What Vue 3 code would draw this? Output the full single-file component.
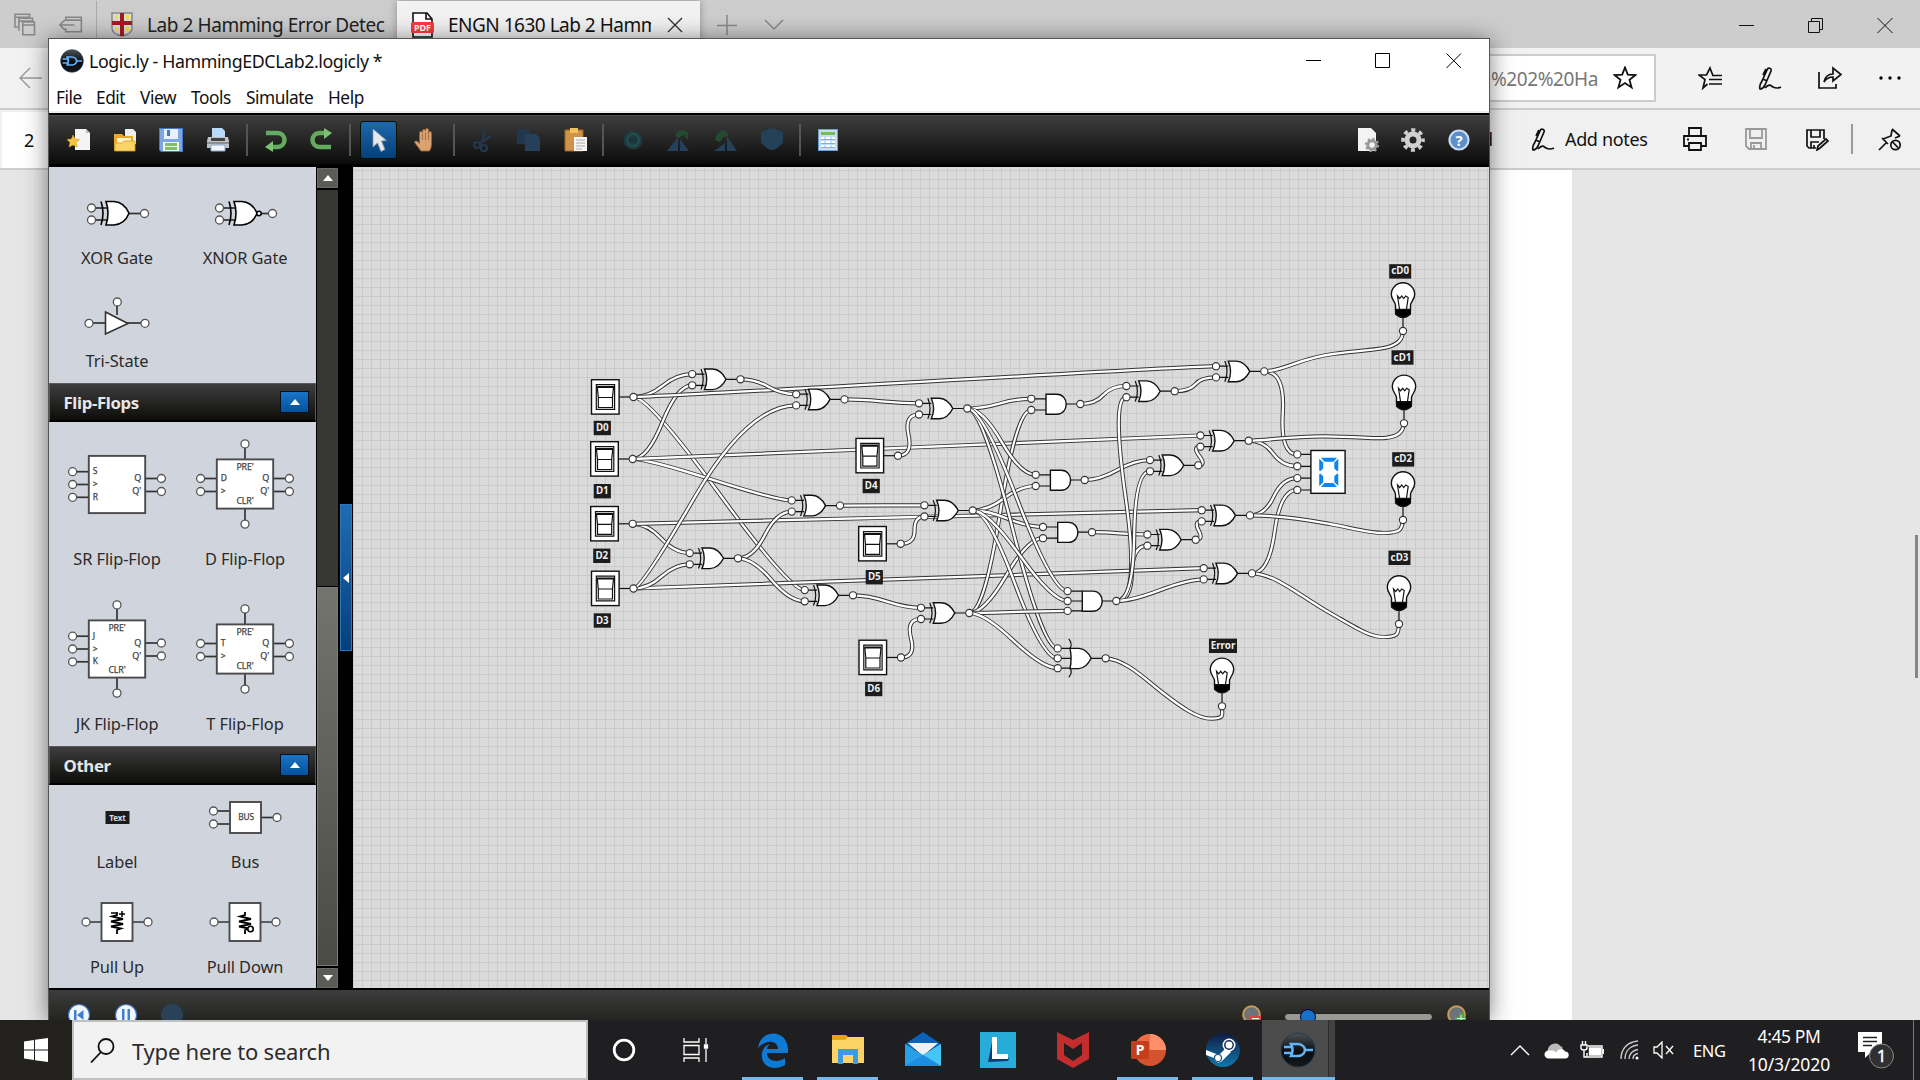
<script setup>
const xors = [
  [740.5, 379.3], [844.5, 399.4], [840, 505.6], [738, 558.3], [853, 595.3],
  [967.3, 408.5], [972.7, 510.5], [969.3, 613], [1174.7, 391.2], [1198.3, 465.3],
  [1195.7, 539.7], [1264.3, 371.4], [1248.7, 440.7], [1250, 515.4], [1252, 573.4],
]
const ands = [[1080.3, 404], [1084.7, 480], [1092, 532.2]]
const and3 = [1116.3, 601]
const or3 = [1105.7, 658.3]
const switches = [
  { n: 'D0', x: 633.5, y: 397, lx: 602.3, ly: 428 },
  { n: 'D1', x: 632.7, y: 459, lx: 602.3, ly: 491.2 },
  { n: 'D2', x: 632.7, y: 523.8, lx: 601.8, ly: 555.8 },
  { n: 'D3', x: 633.5, y: 588.5, lx: 602.3, ly: 620.5 },
  { n: 'D4', x: 898, y: 455.7, lx: 871.2, ly: 486 },
  { n: 'D5', x: 900.7, y: 543.8, lx: 874.3, ly: 577.2 },
  { n: 'D6', x: 901, y: 657.5, lx: 873.7, ly: 689 },
]
const lamps = [
  { n: 'cD0', x: 1403, y: 331, lx: 1400.2, ly: 271.4, w: 22 },
  { n: 'cD1', x: 1404, y: 423.3, lx: 1402.5, ly: 357.5, w: 22 },
  { n: 'cD2', x: 1403, y: 520, lx: 1403.2, ly: 459.4, w: 22 },
  { n: 'cD3', x: 1399, y: 624, lx: 1399.5, ly: 557.8, w: 22 },
  { n: 'Error', x: 1222, y: 706.3, lx: 1223, ly: 645.8, w: 28 },
]
const X = (i, k) => [xors[i - 1][0] - 48.3, xors[i - 1][1] + (k === 1 ? -5.2 : 6)]
const XO = (i) => xors[i - 1]
const A = (i, k) => [ands[i - 1][0] - 49, ands[i - 1][1] + (k === 1 ? -5.2 : 6)]
const AO = (i) => ands[i - 1]
const N = (k) => [and3[0] - 48.7, and3[1] + (k - 2) * 9.9]
const O = (k) => [or3[0] - 48, or3[1] + (k - 2) * 9.9]
const D = (i) => [switches[i].x, switches[i].y]
const S = (k) => [1297.3, 454.4 + (k - 1) * 11.85]

function link([x1, y1], [x2, y2], a = 15, b = a) {
  const mx = (x1 + a + x2 - b) / 2
  const my = (y1 + y2) / 2
  return `M${x1} ${y1}Q${x1 + a} ${y1} ${mx} ${my}Q${x2 - b} ${y2} ${x2} ${y2}`
}
const wires = [
  link(D(0), X(1, 1)), link(D(0), X(5, 1)), link(D(1), X(1, 2)), link(D(1), X(3, 1)),
  link(D(0), X(12, 1)), link(D(1), X(13, 1)), link(D(2), X(4, 1)), link(D(2), X(14, 1)),
  link(D(3), X(15, 1)), link(D(3), X(4, 2)), link(D(3), X(2, 2), 8, 48),
  link(XO(1), X(2, 1)), link(XO(4), X(3, 2)), link(XO(4), X(5, 2)),
  link(XO(2), X(6, 1)), link(D(4), X(6, 2)), link(XO(3), X(7, 1)), link(D(5), X(7, 2), 14, 10),
  link(XO(5), X(8, 1)), link(D(6), X(8, 2)),
  link(XO(6), A(1, 1)), link(XO(8), A(1, 2)), link(XO(6), A(2, 1)), link(XO(7), A(2, 2)),
  link(XO(7), A(3, 1)), link(XO(8), A(3, 2)),
  link(XO(7), O(2)), link(XO(6), O(1)), link(XO(6), N(1)), link(XO(7), N(2)), link(XO(8), N(3)),
  link(XO(8), O(3)),
  link(AO(1), X(9, 1)), link(AO(2), X(10, 1)), link(AO(3), X(11, 1)),
  link(and3, X(9, 2), 24, 15), link(and3, X(11, 2)), link(and3, X(10, 2), 17, 15), link(and3, X(15, 2)),
  link(XO(9), X(12, 2)), link(XO(10), X(13, 2), 8), link(XO(11), X(14, 2), 8),
  link(XO(12), S(1), 21, 17), link(XO(13), S(2)), link(XO(14), S(3)), link(XO(15), S(4), 17),
  'M1264.3 371.3C1283 371.5 1300 358 1333 354C1367 349.5 1380 350 1390 346.5C1398 343.5 1402.5 340 1403 331',
  'M1248.7 440.7C1268 440.7 1290 436 1325 436.3S1375 439 1386 437.8S1403 433 1404 423.3',
  'M1250 515.3C1285 515.5 1310 520.5 1330 524S1370 533.5 1385 533S1402 530 1403 520',
  'M1252 573.3C1275 573.5 1300 596 1330 613S1370 637 1384 637S1398.5 634 1399 624',
  'M1105.7 658.3C1125 659 1145 679 1163 693S1198 719 1212 718.7S1221.5 714 1222 706.3',
]

const dot = (x, y) => `<circle cx="${x}" cy="${y}" r="4" fill="#fff" stroke="#555" stroke-width="1.3"/>`
const line = (a, b, c, d) => `<path d="M${a} ${b}L${c} ${d}" stroke="#333" stroke-width="1.7"/>`
const word = (x, y, t, s = 8, anchor = 'middle') => `<text x="${x}" y="${y}" font-size="${s}" text-anchor="${anchor}" fill="#444" stroke="#444" stroke-width=".25" font-family="Noto Sans, sans-serif">${t}</text>`
const chip = (x, y, w, h) => `<rect x="${x}" y="${y}" width="${w}" height="${h}" fill="#fff" stroke="#4a4a4a" stroke-width="1.9"/>`
const xorShape = (inv) =>
  line(-25, -5, -10, -5) + line(-25, 7, -10, 7) + line(12, 0.5, 26, 0.5) +
  `<path d="M-11 -11.5H-3C4 -11 9 -7 12 0.300C9 8 4 11.5 -3 12H-11Q-7 0 -11 -11.5Z" fill="#fff" stroke="#000" stroke-width="1.6"/><path d="M-16 -11.5Q-12 0 -16 12" fill="none" stroke="#000" stroke-width="1.6"/>` +
  (inv ? '<circle cx="14" cy="0.500" r="2.200" fill="#fff" stroke="#000" stroke-width="1.5"/>' : '') +
  dot(-25.5, -5) + dot(-25.5, 7) + dot(27.5, 0.5)
function flop(ins, tall, pins) {
  const w = 28.2
  const h = tall ? 28.6 : 24.6
  const cy = tall && !pins ? 0.5 : 0
  const oy = cy + (tall ? -6 : -5.5)
  let s = ''
  ins.forEach((t, i) => {
    const y = tall ? cy + (i - 1) * 12.8 : -5.5 + i * 13
    s += line(-42, y, -w, y) + dot(-44.4, y)
  })
  s += line(w, oy, 42, oy) + dot(44.4, oy) + line(w, oy + 13, 42, oy + 13) + dot(44.4, oy + 13)
  if (pins) s += line(0, -h, 0, -h - 14) + dot(0, -h - 15.5) + line(0, h, 0, h + 14) + dot(0, h + 15.5)
  s += chip(-w, cy - h, w * 2, h * 2)
  ins.forEach((t, i) => {
    const y = tall ? cy + (i - 1) * 12.8 : -5.5 + i * 13
    s += word(-w + 4, y + 2.5, t, 8.5, 'start')
  })
  s += word(w - 4, oy + 2.8, 'Q', 9, 'end') + word(w - 4, oy + 15.8, "Q'", 9, 'end')
  if (pins) s += word(0, -h + 11, "PRE'", 8.8) + word(0, h - 5, "CLR'", 8.8)
  return s
}
const zig = '<path d="M0 -10V-7L-5 -5.5L6 -3L-6 -0.5L6 2L-6 4.5L4 6.5L0 8V12" fill="none" stroke="#000" stroke-width="1.8"/>'
const pull = (extra) => line(-30, 0, 30, 0) + chip(-15.5, -19, 31, 38) + zig + extra + dot(-31, 0) + dot(31, 0)

const sections = [
  {
    cls: 'gates', h: 60, items: [
      { t: 'XOR Gate', s: xorShape(false) },
      { t: 'XNOR Gate', s: xorShape(true) },
      { t: 'Tri-State', s: line(0, -1, 0, -12) + line(-26, 7, -12, 7) + line(10, 7, 26, 7) + '<path d="M-11.500 -4L11 7.500L-11.500 18Z" fill="#fff" stroke="#333" stroke-width="1.6"/>' + dot(0.3, -14) + dot(-28, 7.300) + dot(28, 7.300) },
    ],
  },
  {
    title: 'Flip-Flops', cls: 'flops', h: 100, items: [
      { t: 'SR Flip-Flop', s: flop(['S', '&gt;', 'R'], true, false) },
      { t: 'D Flip-Flop', s: flop(['D', '&gt;'], false, true) },
      { t: 'JK Flip-Flop', s: flop(['J', '&gt;', 'K'], true, true) },
      { t: 'T Flip-Flop', s: flop(['T', '&gt;'], false, true) },
    ],
  },
  {
    title: 'Other', cls: 'other', h: 50, items: [
      { t: 'Label', s: '<rect x="-11.500" y="-6" width="24" height="13" fill="#1c1c1c"/><text x="0.500" y="3.500" font-size="8" font-weight="bold" text-anchor="middle" fill="#ddd" font-family="Noto Sans, sans-serif">Text</text>' },
      { t: 'Bus', s: line(-30, -6, -15, -6) + line(-30, 7, -15, 7) + line(15, 0.5, 30, 0.5) + chip(-15, -15, 31, 31) + word(1, 3, 'BUS', 8.3) + dot(-31.5, -6) + dot(-31.5, 7) + dot(32, 0.5) },
      { t: 'Pull Up', s: pull('<path d="M-6 -9H-1M2 -8H8M5 -11V-5" stroke="#000" stroke-width="1.5"/>') },
      { t: 'Pull Down', s: pull('<circle cx="5.500" cy="7" r="2.700" fill="#fff" stroke="#000" stroke-width="1.600"/>') },
    ],
  },
]

const tools = {
  new: '<path d="M8 1h11l4 4v17H8z" fill="#f4f4f4"/><path d="M19 1v4h4z" fill="#bbb"/><path d="M6 7l2 4 4.500.5-3.300 3 1 4.500L6 17l-4 2 1-4.500-3-3 4.500-.5z" fill="#f6c445" stroke="#d99a1c" stroke-width=".6"/>',
  open: '<path d="M12 1h8l3 3v12H12z" fill="#eee"/><path d="M1 6h8l2 2h9v15H1z" fill="#e9a92c"/><path d="M4 10h14v5H4z" fill="#fff3c8"/><path d="M2 15h7l2-2h11v10H2z" fill="#fbd468" stroke="#d99a2c" stroke-width=".8"/>',
  save: '<path d="M0 0h24v24H2l-2-2z" fill="#4377c9"/><path d="M1 1h22v22H2l-1-1z" fill="#7ea6e3"/><path d="M5 1h14v10H5z" fill="#e8f0fb"/><path d="M8 2h3v6H8z" fill="#4377c9"/><path d="M4 14h16v9H4z" fill="#eef6e6"/><path d="M6 15h12v3H6zM6 19h12v3H6z" fill="#82be6b"/>',
  print: '<path d="M6 0h10l3 3v9H6z" fill="#b9dbfa"/><path d="M2 9h20l1 4v7H1v-7z" fill="#bfc1c4"/><path d="M5 10h14v3H5z" fill="#444"/><path d="M1 14h22v2H1z" fill="#8c8f92"/><path d="M5 17h14v6H5z" fill="#f1f5fa" stroke="#86a9cf"/>',
  undo: '<path d="M3 5h11c10 0 10 14 0 14H9" fill="none" stroke="#64aa5f" stroke-width="4.500"/><path d="M10 13v11L2 19z" fill="#7cc176"/>',
  redo: '<path d="M22 19H11C1 19 1 5 11 5h4" fill="none" stroke="#64aa5f" stroke-width="4.500"/><path d="M15 0v11l8-6z" fill="#7cc176"/>',
  pointer: '<path d="M7 1v18l4.500-4 3.500 8.500 4-2L15.500 13l5-.5z" fill="#e8e8ea" stroke="#8a95a5" stroke-width=".8"/>',
  hand: '<path d="M8 23c-2-3-4-5-6-8-1-2 1-3 3-1l1.500 1.500V5c0-2 3-2 3 0V3c0-2 3-2 3 0v-1c0-2 3-2 3 0V5c0-2 3-2 3 0v11c0 3-1 5-2 7z" fill="#dba271" stroke="#9a6238" stroke-width=".9"/><path d="M9.500 6v6M12.500 4v8M15.500 5v7" stroke="#9a6238" stroke-width=".8"/>',
  cut: '<g fill="none" stroke="#23384c" stroke-width="2.200"><path d="M15 1l-3 14M21 8L9 16"/><circle cx="7" cy="17" r="3"/><circle cx="14" cy="20" r="3"/></g>',
  copy: '<path d="M1 1h10l3 3v12H1z" fill="#20374d"/><path d="M9 6h11l4 4v13H9z" fill="#24405a"/>',
  paste: '<path d="M2 2h18v21H2z" fill="#cf9248" stroke="#9c672b"/><path d="M7 0h8v5H7z" fill="#f2c15c"/><path d="M11 9h13v14H11z" fill="#f5f5f5"/><path d="M13 12h9M13 15h9M13 18h9M13 21h6" stroke="#aaa"/>',
  minus: '<circle cx="13" cy="12" r="9.500" fill="#1d3a42"/><circle cx="13" cy="12" r="6" fill="none" stroke="#24504a" stroke-width="2"/><path d="M9 10.500h8v3H9z" fill="#1a333b"/>',
  rotl: '<path d="M1 23L12 9v14zM14 11l9 12h-9z" fill="#23415a"/><path d="M9 7Q14-1 22 4v8l-4-5-6 3z" fill="#23492f"/>',
  rotr: '<path d="M1 23l11-8v8zM14 8l10 15H14z" fill="#23415a"/><path d="M2 12Q4 2 12 2l4 6-6 1-3 5z" fill="#23492f"/>',
  shield: '<path d="M8 2Q13-2 18 2l6 2v11l-6 5q-5 4-10 0l-6-5V4z" fill="#234259"/>',
  table: '<path d="M2 1h20v22H2z" fill="#6f9fdc"/><path d="M3 2h18v20H3z" fill="#c9dcf5"/><path d="M5 4h14v3H5z" fill="#76bb66"/><path d="M5 9h3v2H5zM10 9h4v2h-4zM16 9h3v2h-3zM5 13h3v2H5zM10 13h4v2h-4zM16 13h3v2h-3zM5 17h3v2H5zM10 17h4v2h-4zM16 17h3v2h-3z" fill="#fff"/><path d="M5 11.500h14M5 15.500h14M5 19.500h14" stroke="#86abdf"/>',
  page: '<path d="M3 0h13l5 5v18H3z" fill="#f3f3f3"/><g transform="translate(17 17)"><circle r="4.200" fill="none" stroke="#999" stroke-width="3"/><circle r="6.200" fill="none" stroke="#999" stroke-width="2" stroke-dasharray="2.4 2.4"/></g>',
  gear: '<circle cx="12" cy="12" r="6" fill="none" stroke="#d0d0d0" stroke-width="5"/><circle cx="12" cy="12" r="10" fill="none" stroke="#d0d0d0" stroke-width="3.600" stroke-dasharray="4 3.850" stroke-dashoffset="2"/>',
  help: '<circle cx="12" cy="12" r="9.500" fill="#5a8fcb" stroke="#c7dcf3" stroke-width="2.200"/><text x="12" y="17.500" font-size="15" font-weight="bold" text-anchor="middle" fill="#fff" font-family="Noto Sans, sans-serif">?</text>',
}
const toolbar = ['new', 'open', 'save', 'print', '|', 'undo', 'redo', '|', 'pointer', 'hand', '|', 'cut', 'copy', 'paste', '|', 'minus', 'rotl', 'rotr', 'shield', '|', 'table']
const toolbarRight = ['page', 'gear', 'help']

const ui = {
  star: '<path d="M12 1.500l2.800 7.200 7.700.3-6 4.900 2.100 7.600-6.600-4.400-6.600 4.400 2.100-7.600-6-4.900 7.700-.3z" fill="none" stroke="#111" stroke-width="1.800"/>',
  favs: '<path d="M9.500 18L5 22l2-8.500L1 9h7.500L12 2l2.700 7" fill="none" stroke="#111" stroke-width="1.700"/><path d="M14 9.500h10M11 13.500h13M11 18h13" stroke="#111" stroke-width="1.700"/>',
  pen: '<path d="M2 23c-1-3 0-5 2-8L9 4c1-3 5-2 4 1L7 19c-1 2-3 4-5 4zM5 13l4 2M8 3l-3 6M7 22c5-5 6-2 8-1s4 2 8 0" fill="none" stroke="#111" stroke-width="1.700"/>',
  share: '<path d="M1 6v16h17v-4M6 16c1-5 4-8 9-8V2l8 6.500-8 6.500v-4c-4 0-7 2-9 5z" fill="none" stroke="#111" stroke-width="1.700"/>',
  dots: '<circle cx="3" cy="12" r="1.700"/><circle cx="12" cy="12" r="1.700"/><circle cx="21" cy="12" r="1.700"/>',
  printer: '<path d="M6 8V1h12v7M6 19H1V9h22v10h-5M6 16h12v7H6zM4 12.500h2" fill="none" stroke="#111" stroke-width="1.800"/>',
  disk: '<path d="M2 2h20v20H5l-3-3zM6 2v9h12V2M7 22v-6h10v6M10 18v4" fill="none" stroke="#999" stroke-width="1.800"/>',
  diskpen: '<path d="M11 21H4l-2-2V3h17v9M6 3v7h9V3M6 21v-6h8M9 18v3M12 23l1-4 8-7 2 2-8 7z" fill="none" stroke="#111" stroke-width="1.700"/>',
  pin: '<path d="M1 23l8-8M4 11l6 6M5 12l8-3 1-6M14 2l8 7M22 9l-5 2" fill="none" stroke="#111" stroke-width="1.700"/><circle cx="17.500" cy="18" r="4.700" fill="none" stroke="#111" stroke-width="1.700"/><path d="M14.500 15l6 6" stroke="#111" stroke-width="1.700"/>',
}

const logo = '<defs><linearGradient id="lg" x1="0" y1="0" x2="0" y2="1"><stop offset="0" stop-color="#4b5257"/><stop offset=".55" stop-color="#0a0c0e"/><stop offset="1" stop-color="#15191c"/></linearGradient></defs><circle cx="18" cy="18" r="17" fill="url(#lg)" stroke="#25394a" stroke-width="1"/><path d="M11 12h7c5 0 7 4 7 6s-2 6-7 6h-7q3-6 0-12zM25 18h8M4 15h8M4 21h8" fill="none" stroke="#63b4f7" stroke-width="2.600"/>'
const apps = [
  { on: true, s: '<path d="M3 16C5-3 32-4 33 17v4H12c0 9 12 10 18 5v7C18 40 5 34 7 21c1-5 4-8 8-9-3 3-3 4-3 5h11c0-9-13-10-20-1z" fill="#0d7ad6"/>' },
  { on: true, s: '<path d="M2 3h14l3 3v6H2z" fill="#e8a317"/><path d="M2 8h13l3-3h16v26H2z" fill="#fdd367"/><path d="M8 18q0-1 1-1h18q1 0 1 1v14h-5v-9H13v9H8z" fill="#3f9bdf"/>' },
  { on: false, s: '<path d="M0 12L18 0l18 12-3 5H3z" fill="#0a62b8"/><path d="M3 11h30L18 24z" fill="#eef0f3"/><path d="M0 12l18 11L36 12v22H0z" fill="#28a0e8"/><path d="M18 23l18-11v22z" fill="#45c6f6"/><path d="M0 34l18-11 18 11z" fill="#1c8de0"/>' },
  { on: false, s: '<path d="M0 0h36v36H0z" fill="#27acd9"/><path d="M13 5L8 30l20-1 1-3H16z" fill="#0a3a78"/><path d="M12 5h5v17h11v5H12z" fill="#fff"/>' },
  { on: false, s: '<path d="M2 0l16 8L34 0v27l-16 9L2 27zM9 11v12l9 6 9-6V11l-9 6z" fill="#c22d2e" fill-rule="evenodd"/>' },
  { on: true, s: '<circle cx="20" cy="18" r="16" fill="#d35230"/><path d="M20 2a16 16 0 0 1 16 16H20z" fill="#ff8f6b"/><path d="M20 2v16H4A16 16 0 0 1 20 2z" fill="#ed6c47"/><rect x="1" y="9" width="18" height="18" rx="1.500" fill="#c43e1c"/><text x="10" y="23" font-size="14" font-weight="bold" text-anchor="middle" fill="#fff" font-family="Noto Sans, sans-serif">P</text>' },
  { on: true, s: '<defs><linearGradient id="st" x1="0" y1="0" x2="0" y2="1"><stop offset="0" stop-color="#101b40"/><stop offset="1" stop-color="#1078ae"/></linearGradient></defs><circle cx="18" cy="18" r="17" fill="url(#st)"/><path d="M1 18l13 5 8-8 4 5-9 9c-3 3-8 1-8-3l-8-3z" fill="#fff"/><circle cx="24" cy="13" r="6.500" fill="#fff"/><circle cx="24" cy="13" r="4.200" fill="none" stroke="#1b2c57" stroke-width="1.500"/><circle cx="13" cy="26" r="3.500" fill="none" stroke="#1b4c80" stroke-width="1.200"/>' },
  { on: true, active: true, s: logo },
]
const menus = ['File', 'Edit', 'View', 'Tools', 'Simulate', 'Help']
</script>

<template>
  <div class="screen">
    <div class="browser">
      <div class="tabs">
        <svg class="i-tabs" width="84" height="24" viewBox="0 0 84 24" fill="none" stroke="#888" stroke-width="1.6"><path d="M4 14H1V1h15v4M1 4h15M5 18V5h14v4M5 8h14M9 9h12v13H9zM9 12h12" /><path d="M53 8V4h16v15H53v-4M53 7h16M48 12h14M52 7l-5 5 5 5" /></svg>
        <div class="tab">
          <svg width="22" height="25" viewBox="0 0 22 25"><path d="M1 1h20v15c0 5-5 7-10 8C6 23 1 21 1 16z" fill="#ddd" stroke="#888" stroke-width="1.5" /><path d="M9 1h4v8h8v4h-8v11H9V13H1V9h8z" fill="#a11d20" /><path d="M4 3h3v4H4zM15 3h3v4h-3zM4 15h3v4H4zM15 15h3v4h-3z" fill="#f5e13d" /></svg>
          <span class="tt t1">Lab 2 Hamming Error Detec</span>
        </div>
        <div class="tab on">
          <svg width="24" height="26" viewBox="0 0 24 26"><path d="M2 1h14l5 6v18H2z" fill="#fff" stroke="#111" stroke-width="1.6" /><path d="M15 1v6h6" fill="none" stroke="#111" stroke-width="1.6" /><rect x="0" y="10" width="23" height="11" rx="1.500" fill="#fb3b3b" /><text x="11.500" y="19" font-size="9" font-weight="bold" text-anchor="middle" fill="#fff" font-family="Noto Sans, sans-serif">PDF</text></svg>
          <span class="tt t2">ENGN 1630 Lab 2 Hamm</span>
          <svg width="16" height="16" viewBox="0 0 16 16"><path d="M1 1l14 14M15 1L1 15" stroke="#333" stroke-width="1.4" /></svg>
        </div>
        <svg class="plus" width="70" height="20" viewBox="0 0 70 20" fill="none" stroke="#888" stroke-width="1.5"><path d="M0 10.500h20M10 0v20M48 5l9 9 9-9" /></svg>
        <svg class="winb" width="154" height="16" viewBox="0 0 154 16" fill="none" stroke="#111"><path d="M0 8.500h15M69.500 4.500h11v11h-11zM72.500 4V1.500h11v11h-3M138.500 1l15 15M153.500 1l-15 15" /></svg>
      </div>
      <div class="address">
        <svg class="back" width="24" height="22" viewBox="0 0 24 22" fill="none" stroke="#999" stroke-width="1.4"><path d="M23 11H1M11 1L1 11l10 10" /></svg>
        <div class="url"><span>%202%20Ha</span><svg width="24" height="24" viewBox="0 0 24 24" v-html="ui.star"></svg></div>
        <div class="acts">
          <svg v-for="k in ['favs', 'pen', 'share', 'dots']" :key="k" width="24" height="24" viewBox="0 0 24 24" v-html="ui[k]"></svg>
        </div>
      </div>
      <div class="pdfbar">
        <div class="pageno">2</div>
        <span class="read">d</span>
        <svg class="p1" width="24" height="24" viewBox="0 0 24 24" v-html="ui.pen"></svg>
        <span class="notes">Add notes</span>
        <svg class="p2" width="24" height="24" viewBox="0 0 24 24" v-html="ui.printer"></svg>
        <svg class="p3" width="24" height="24" viewBox="0 0 24 24" v-html="ui.disk"></svg>
        <svg class="p4" width="24" height="24" viewBox="0 0 24 24" v-html="ui.diskpen"></svg>
        <i class="bar"></i>
        <svg class="p5" width="24" height="24" viewBox="0 0 24 24" v-html="ui.pin"></svg>
      </div>
      <div class="doc"><div class="sheet"></div><div class="thumb"></div></div>
    </div>

    <div class="window">
      <div class="title">
        <svg width="24" height="24" viewBox="0 0 36 36" v-html="logo"></svg>
        <span class="name">Logic.ly - HammingEDCLab2.logicly *</span>
        <svg class="ctl" width="156" height="16" viewBox="0 0 156 16" fill="none" stroke="#000"><path d="M0 7.500h15M69.500.5h14v14h-14zM140.500.5l14.500 14.500M155 .5L140.500 15" /></svg>
      </div>
      <div class="menu"><span v-for="m in menus" :key="m" :class="m.toLowerCase()">{{ m }}</span></div>
      <div class="toolbar">
        <template v-for="(t, i) in toolbar" :key="i">
          <i v-if="t === '|'" class="sep"></i>
          <div v-else class="tool"><div :class="{ sel: t === 'pointer' }"><svg width="24" height="24" viewBox="0 0 24 24" v-html="tools[t]"></svg></div></div>
        </template>
        <div class="spring"></div>
        <div v-for="t in toolbarRight" :key="t" class="tool r"><svg width="24" height="24" viewBox="0 0 24 24" v-html="tools[t]"></svg></div>
      </div>
      <div class="work">
        <div class="panel">
          <template v-for="s in sections" :key="s.cls">
            <div v-if="s.title" class="head"><span>{{ s.title }}</span><div class="fold"><svg width="10" height="6" viewBox="0 0 10 6"><path d="M0 6L5 0l5 6z" fill="#fff" /></svg></div></div>
            <div class="grid" :class="s.cls">
              <div v-for="it in s.items" :key="it.t" class="item">
                <svg width="120" :height="s.h" :viewBox="`-60 ${-s.h / 2} 120 ${s.h}`" v-html="it.s"></svg>
                <span>{{ it.t }}</span>
              </div>
            </div>
          </template>
        </div>
        <div class="scroll">
          <div class="sb"><svg width="10" height="6" viewBox="0 0 10 6"><path d="M0 6L5 0l5 6z" fill="#fff" /></svg></div>
          <div class="track"></div>
          <div class="grip"></div>
          <div class="sb"><svg width="10" height="6" viewBox="0 0 10 6"><path d="M0 0l5 6 5-6z" fill="#fff" /></svg></div>
        </div>
        <div class="divider"><div class="handle"><svg width="6" height="10" viewBox="0 0 6 10"><path d="M6 0L0 5l6 5z" fill="#fff" /></svg></div></div>
        <svg class="canvas" width="1136" height="821" viewBox="353 167 1136 821">
          <defs><pattern id="cells" x="362" y="170" width="9" height="9" patternUnits="userSpaceOnUse"><path d="M0 0h9v1H1v8H0z" fill="#cbcbcb" /></pattern></defs>
          <rect x="353" y="167" width="1136" height="821" fill="#dbdbdb" />
          <rect x="353" y="167" width="1136" height="821" fill="url(#cells)" />
          <g v-for="(w, i) in wires" :key="i" fill="none"><path :d="w" stroke="#333" stroke-width="4.2" /><path :d="w" stroke="#fff" stroke-width="2.3" /></g>

          <g v-for="(g, i) in xors" :key="'x' + i" :transform="`translate(${g[0]} ${g[1]})`" class="gate">
            <path d="M-48 -5.200H-36M-48 6H-36M-15 0H0" />
            <path class="body" d="M-36 -10.300H-28C-21 -10 -17 -5 -14.500 0C-17 5 -21 10 -28 10.300H-36Q-31.500 0 -36 -10.300Z" />
            <path d="M-39.500 -10.300Q-35 0 -39.500 10.300" />
            <circle cx="-48.300" cy="-5.200" r="3.600" /><circle cx="-48.300" cy="6" r="3.600" /><circle r="3.600" />
          </g>
          <g v-for="(g, i) in ands" :key="'a' + i" :transform="`translate(${g[0]} ${g[1]})`" class="gate">
            <path d="M-49 -5.200H-34M-49 6H-34M-15 0H0" />
            <path class="body" d="M-34.300 -9.800H-23.500C-11 -9.800 -11 10.200 -23.500 10.200H-34.300Z" />
            <circle cx="-49" cy="-5.200" r="3.600" /><circle cx="-49" cy="6" r="3.600" /><circle r="3.600" />
          </g>
          <g :transform="`translate(${and3[0]} ${and3[1]})`" class="gate">
            <path d="M-49 -9.900H-34M-49 0H-34M-49 9.900H-34M-15 0H0" />
            <path class="body" d="M-34 -9.900H-23.500C-11 -9.900 -11 10.300 -23.500 10.300H-34Z" />
            <circle cx="-48.700" cy="-9.900" r="3.600" /><circle cx="-48.700" r="3.600" /><circle cx="-48.700" cy="9.900" r="3.600" /><circle r="3.600" />
          </g>
          <g :transform="`translate(${or3[0]} ${or3[1]})`" class="gate">
            <path d="M-48 -9.900H-35M-48 0H-34M-48 9.900H-35M-15 0H0M-37 -19.500Q-33 -15 -35.500 -10M-35.500 10Q-33 15 -37 19" />
            <path class="body" d="M-35.700 -9.900H-27C-21 -9.500 -17 -5 -14.500 0C-17 5 -21 10 -27 10.300H-35.700Q-33.500 0 -35.700 -9.900Z" />
            <circle cx="-48" cy="-9.900" r="3.600" /><circle cx="-48" r="3.600" /><circle cx="-48" cy="9.900" r="3.600" /><circle r="3.600" />
          </g>

          <g v-for="s in switches" :key="s.n">
            <g :transform="`translate(${s.x} ${s.y})`" class="gate">
              <path d="M-14 0H0" />
              <rect class="body" x="-42" y="-17.300" width="27.600" height="34.400" />
              <path d="M-37.200 -12.300h18.300v24.600h-18.300z" />
              <path d="M-35.200 10.500V0.500L-36.200 -9.500H-20L-21 0.500V10.500ZM-35.200 0.500H-21M-36 -7.500V-10.500H-20V-7.500" />
              <circle r="3.600" />
            </g>
            <rect :x="s.lx - 8.600" :y="s.ly - 7.200" width="17.200" height="14.400" fill="#1c1c1c" />
            <text class="lab" :x="s.lx" :y="s.ly + 3">{{ s.n }}</text>
          </g>
          <g v-for="l in lamps" :key="l.n">
            <g :transform="`translate(${l.x} ${l.y})`" class="gate">
              <path d="M0 -13V0" />
              <path class="body" d="M-7.500 -21.500V-26C-8 -29 -11.700 -32 -11.700 -36.500A11.700 11.700 0 0 1 11.700 -36.500C11.700 -32 8 -29 7.500 -26V-21.500Z" />
              <path d="M-3.500 -22L-5.500 -35L-3.300 -32.500L-1.300 -35L0.700 -32.500L2.700 -35L5.200 -33.500L3.500 -22" />
              <path d="M-7.500 -21.500H7.500V-17Q4 -13.500 0 -13.500Q-4 -13.500 -7.500 -17Z" fill="#000" />
              <circle r="3.600" />
            </g>
            <rect :x="l.lx - l.w / 2" :y="l.ly - 7.200" :width="l.w" height="14.400" fill="#1c1c1c" />
            <text class="lab" :x="l.lx" :y="l.ly + 3">{{ l.n }}</text>
          </g>
          <g class="gate">
            <path d="M1297 454.400H1311M1297 466.300H1311M1297 478.100H1311M1297 490H1311" />
            <rect class="body" x="1310.900" y="450.500" width="34.200" height="42.800" />
            <circle v-for="k in 4" :key="k" cx="1297.300" :cy="454.400 + (k - 1) * 11.850" r="3.600" />
          </g>
          <path d="M1321 457.700h16l-3.500 4h-9zM1319.200 458.700l4 3.700v6l-3 2.800-1-1zM1338.300 458.700l-4 3.700v6l3 2.800 1-1zM1319.200 486l4-3.700v-6l-3-2.800-1 1zM1338.300 486l-4-3.700v-6l3-2.800 1 1zM1321 487h16l-3.500-4h-9z" fill="#0b86f0" />
        </svg>
      </div>
      <div class="status">
        <svg width="24" height="24" viewBox="0 0 24 24"><circle cx="12" cy="12" r="10.500" fill="#f2f7fd" stroke="#3f74bd" stroke-width="1.200" /><path d="M7 7h2.500v10H7zM16.500 7v10L10 12z" fill="#3f7fd0" /></svg>
        <svg width="24" height="24" viewBox="0 0 24 24"><circle cx="12" cy="12" r="10.500" fill="#f2f7fd" stroke="#3f74bd" stroke-width="1.200" /><path d="M8 6h2.500v12H8zM13.500 6H16v12h-2.500z" fill="#3f7fd0" /></svg>
        <svg width="24" height="24" viewBox="0 0 24 24"><circle cx="12" cy="12" r="11" fill="#294257" /></svg>
        <div class="spring"></div>
        <svg class="zo" width="20" height="20" viewBox="0 0 20 20"><circle cx="9.500" cy="9.500" r="8.300" fill="#6c737a" stroke="#c99b55" stroke-width="2" /><path d="M8 11h11v5H8z" fill="#ee3b3b" /><path d="M10 13h7v1.200h-7z" fill="#fff" /></svg>
        <div class="slider"><i></i></div>
        <svg class="zi" width="20" height="20" viewBox="0 0 20 20"><circle cx="9.500" cy="9.500" r="8.300" fill="#6c737a" stroke="#c99b55" stroke-width="2" /><path d="M8 12h4V8h4v4h3v5H8z" fill="#4aa845" /><path d="M10 13.500h8M14 10v6" stroke="#cfe" /></svg>
      </div>
    </div>

    <div class="taskbar">
      <div class="start"><svg width="24" height="24" viewBox="0 0 24 24" fill="#fff"><path d="M0 3.500l10-1.500v9.500H0zM11 1.800L24 0v11.500H11zM0 12.500h10V22L0 20.500zM11 12.500h13V24l-13-1.800z" /></svg></div>
      <div class="search"><svg width="25" height="25" viewBox="0 0 25 25" fill="none" stroke="#111" stroke-width="1.800"><circle cx="16" cy="8.500" r="7.500" /><path d="M11 14L1 24.500" /></svg><span>Type here to search</span></div>
      <svg class="cort" width="24" height="24" viewBox="0 0 24 24"><circle cx="12" cy="12" r="9.800" fill="none" stroke="#fff" stroke-width="2.800" /></svg>
      <svg class="tv" width="26" height="24" viewBox="0 0 26 24" fill="none" stroke="#fff" stroke-width="1.300"><path d="M1 0v4h15V0M1 7.500h15v9H1zM1 24v-4h15v4M23 0v6M23 11v13" /><path d="M21.500 7h3v3h-3z" fill="#fff" /></svg>
      <div class="apps"><div v-for="(a, i) in apps" :key="i" class="app" :class="{ on: a.on, active: a.active }"><svg width="36" height="36" viewBox="0 0 36 36" v-html="a.s"></svg></div></div>
      <div class="tray">
        <svg class="s1" width="20" height="12" viewBox="0 0 20 12" fill="none" stroke="#fff" stroke-width="1.400"><path d="M1 11l9-9 9 9" /></svg>
        <svg class="s2" width="25" height="17" viewBox="0 0 25 17"><path d="M4 12C2 5 8 0 14 2l5 4-9 9z" fill="#bbb" /><path d="M5 16.500c-6 0-6-8 0-8 4 0 5 0 7 2 3-5 8-4 9-1 5 0 5 7 0 7z" fill="#fff" /></svg>
        <svg class="s3" width="24" height="18" viewBox="0 0 24 18" fill="none" stroke="#fff" stroke-width="1.400"><path d="M8 5h14v11H7v-4M23.500 8v5M1 4h6v3q0 2-3 2t-3-2zM2.500 4V0M5.500 4V0M4 9v7h3" /><path d="M9.500 7h11v7h-11z" fill="#fff" /></svg>
        <svg class="s4" width="20" height="20" viewBox="0 0 20 20" fill="none" stroke="#ccc" stroke-width="1.400"><path d="M1 19C1 8 8 2 18 1M5 19C5 11 10 6 18 5M9 19c0-5 4-9 9-9.500M13 19c0-3 2-5 5-5.500" /><circle cx="17" cy="18" r="1.500" fill="#fff" stroke="none" /></svg>
        <svg class="s5" width="22" height="18" viewBox="0 0 22 18" fill="none" stroke="#fff" stroke-width="1.300"><path d="M1 6h3l5-5v16l-5-5H1zM13 5l7 8M20 5l-7 8" /></svg>
        <span class="eng">ENG</span>
        <div class="clock"><span class="time">4:45 PM</span><span class="date">10/3/2020</span></div>
        <svg class="note" width="38" height="38" viewBox="0 0 38 38"><path d="M1 1h24v20H14l-6 6v-6H1z" fill="#fff" /><path d="M6 6.500h14M6 10.500h14M6 14.500h9" stroke="#222" stroke-width="1.300" /><circle cx="24.500" cy="25" r="12" fill="#303030" stroke="#888" /><text x="24.500" y="31" font-size="17" text-anchor="middle" fill="#fff" stroke="#fff" stroke-width=".4" font-family="Noto Sans, sans-serif">1</text></svg>
        <i class="peek"></i>
      </div>
    </div>
  </div>
</template>

<style>
body { margin: 0; overflow: hidden; }
</style>

<style scoped>
.screen { position: relative; width: 1920px; height: 1080px; overflow: hidden; font-family: "Noto Sans", "Open Sans", sans-serif; color: #111; display: flex; flex-direction: column; }
.screen * { box-sizing: border-box; }
svg { display: block; flex: none; }
span { white-space: nowrap; }
.spring { flex: 1; }
.browser { height: 1020px; display: flex; flex-direction: column; background: #e6e6e6; }
.tabs { height: 48px; background: #cdcdcd; display: flex; align-items: center; flex: none; padding-top: 1px; }
.i-tabs { margin-left: 14px; width: 82px; }
.tab { display: flex; align-items: center; height: 48px; width: 301px; padding-left: 14px; border-left: 1px solid #aaa; }
.tab.on { background: #f2f2f2; border: 0; width: 303px; box-shadow: 0 0 8px rgba(0,0,0,.3); }
.tt { font-size: 19px; overflow: hidden; height: 30px; line-height: 30px; }
.t1 { margin-left: 14px; width: 240px; letter-spacing: -.42px; color: #222; }
.t2 { margin-left: 13px; width: 203px; margin-right: 16px; letter-spacing: -.5px; }
.plus { margin-left: 17px; }
.winb { margin-left: auto; margin-right: 27px; }
.address { height: 62px; background: #f2f2f2; border-bottom: 2px solid #ccc; display: flex; align-items: center; flex: none; }
.back { margin-left: 19px; }
.url { margin-left: auto; width: 400px; height: 48px; border: 2px solid #ccc; background: #fff; display: flex; align-items: center; justify-content: flex-end; padding-right: 17px; gap: 15px; color: #777; font-size: 19px; letter-spacing: -.4px; }
.url span { padding-top: 2px; }
.acts { display: flex; gap: 36px; margin: 0 18px 0 42px; }
.pdfbar { height: 60px; background: #f0f0f0; border-bottom: 2px solid #ccc; display: flex; align-items: center; flex: none; font-size: 18px; }
.pageno { margin-left: 2px; background: #fff; height: 56px; width: 90px; padding-left: 22px; line-height: 57px; align-self: flex-end; }
.read { margin-left: auto; }
.p1 { margin-left: 38px; }
.notes { margin-left: 10px; width: 84px; letter-spacing: -.35px; }
.p2 { margin-left: 34px; } .p3 { margin-left: 37px; } .p4 { margin-left: 37px; }
.bar { width: 2px; height: 30px; background: #999; margin-left: 22px; }
.p5 { margin-left: 25px; margin-right: 18px; }
.doc { flex: 1; display: flex; }
.sheet { width: 1524px; margin-left: 48px; background: #fff; }
.thumb { width: 3px; height: 143px; margin: 365px 2px 0 auto; background: #858585; }

.window { position: absolute; left: 48px; top: 38px; width: 1442px; height: 982px; overflow: hidden; background: #fff; border: 1px solid #555; border-bottom: 0; display: flex; flex-direction: column; clip-path: inset(-40px -40px 0 -40px); box-shadow: 0 2px 22px rgba(0,0,0,.5); }
.title { height: 43px; display: flex; align-items: center; padding-left: 11px; flex: none; }
.name { margin-left: 5px; font-size: 17.800px; letter-spacing: -.4px; }
.ctl { margin-left: auto; margin-right: 27px; }
.menu { height: 31px; flex: none; display: flex; padding-left: 7px; border-bottom: 2px solid #eee; font-size: 17.300px; line-height: 32px; letter-spacing: -.45px; }
.file { width: 40px; } .edit { width: 44px; } .view { width: 51px; } .tools { width: 55px; } .simulate { width: 82px; }
.toolbar { height: 54px; flex: none; background: linear-gradient(#3f3f3f, #0b0b0a); border-top: 2px solid #000; border-bottom: 3px solid #000; box-shadow: inset 0 1px #4d4d4d; display: flex; align-items: center; padding: 0 7.500px 0 6.500px; }
.tool { width: 46.400px; display: flex; justify-content: center; }
.tool.r { width: 45.700px; }
.sep { width: 2px; height: 32px; background: #555; margin: 0 4.100px 0 4.600px; }
.sel { width: 37px; height: 38px; display: flex; align-items: center; justify-content: center; background: linear-gradient(#1e68ab, #053f7c); border: 1px solid #010; border-radius: 3px; }
.work { height: 821px; flex: none; display: flex; background: #000; }
.panel { width: 267px; background: #d0d5dd; color: #2a2a2a; }
.head { height: 39px; border: 1px solid #5a5a5a; border-bottom: 2px solid #000; background: linear-gradient(#3d3d3d, #0d0d0b); display: flex; align-items: center; justify-content: space-between; padding: 0 6px 0 13.500px; color: #e6e6e6; font-weight: bold; font-size: 16.800px; letter-spacing: -.35px; }
.fold { width: 29px; height: 22px; border: 1px solid #012; background: linear-gradient(#1a74c5, #04529d); display: flex; align-items: center; justify-content: center; }
.grid { display: grid; grid-template-columns: 128px 128px; padding-left: 4px; align-content: start; }
.item { display: flex; flex-direction: column; align-items: center; font-size: 16.400px; line-height: 20px; letter-spacing: -.1px; }
.gates { height: 216px; padding-top: 16px; row-gap: 18px; } .gates span { margin-top: 5px; }
.flops { height: 324px; padding-top: 12px; row-gap: 30px; } .flops span { margin-top: 15px; }
.other { padding-top: 7px; row-gap: 25px; } .other span { margin-top: 10px; }
.scroll { width: 22px; margin-left: 1px; padding-top: 1px; display: flex; flex-direction: column; padding-right: 1px; }
.sb { height: 20px; background: #5b5b58; border: 1px solid #6a6a66; display: flex; align-items: center; justify-content: center; }
.track { height: 396px; margin-top: 2px; background: #373733; }
.grip { height: 380px; margin: 1px 0 2px; background: linear-gradient(#74746f, #4b4b46); border: 1px solid #7c7c78; }
.divider { width: 14px; padding: 337px 1px 0 1px; background: #000; }
.handle { width: 12px; height: 147px; background: linear-gradient(#1f6cb0, #073f7d); border: 1px solid #2a78bd; display: flex; align-items: center; justify-content: center; }
.gate path, .gate .body, .gate circle { stroke: #111; stroke-width: 1.200; fill: none; }
.gate .body, .gate circle { fill: #fff; }
.gate .body { stroke-width: 1.400; }
.gate path[fill="#000"] { fill: #000; }
.gate circle { stroke: #333; stroke-width: 1.100; }
.lab { font: bold 9.800px "Noto Sans", sans-serif; fill: #eee; text-anchor: middle; }
.status { height: 60px; flex: none; border-top: 2px solid #000; background: linear-gradient(#3d3d3d, #22221f 32px); display: flex; align-items: flex-start; padding: 13px 22px 0 18px; gap: 22.500px; }
.status .zo { margin: 2px -1px 0 0; }
.slider { width: 149px; height: 8px; margin-top: 10px; background: #999993; border: 1px solid #222; border-radius: 4px; }
.slider i { display: block; width: 16px; height: 16px; margin: -5px 0 0 15px; border-radius: 50%; background: #1572c8; border: 1px solid #003; }
.status .zi { margin: 2px 0 0 -8px; }

.taskbar { height: 60px; position: relative; background: #1f1e20; display: flex; align-items: center; }
.start { width: 72px; height: 60px; background: #22211e; display: flex; align-items: center; justify-content: center; }
.search { width: 516px; height: 60px; background: #f2f2f2; border: 2px solid #c0c0c0; display: flex; align-items: center; padding-left: 16px; gap: 17px; font-size: 22px; letter-spacing: -.22px; color: #2b2b2b; }
.search span { padding-top: 1px; }
.cort { margin-left: 24px; }
.tv { margin-left: 47px; }
.apps { display: flex; margin-left: 33px; gap: 14px; height: 60px; }
.app { width: 61px; display: flex; align-items: center; justify-content: center; border-bottom: 3px solid transparent; padding-top: 3px; }
.app.on { border-color: #76b9ed; }
.app.active { width: 73px; margin-left: -5px; background: linear-gradient(90deg, #4d4c4c 66px, #2d2d2d 66px, #2d2d2d 67px, #414141 67px); padding-right: 1px; }
.tray { margin-left: auto; display: flex; align-items: center; height: 60px; color: #fff; }
.s2 { margin-left: 14px; } .s3 { margin-left: 11px; } .s4 { margin-left: 16px; } .s5 { margin-left: 13px; }
.eng { margin-left: 18px; font-size: 16.500px; width: 36px; letter-spacing: -.3px; padding-top: 1px; }
.clock { margin-left: 18px; width: 84px; display: flex; flex-direction: column; align-items: center; line-height: 28px; }
.time { font-size: 17.500px; letter-spacing: -.4px; }
.date { font-size: 17.500px; letter-spacing: -.1px; }
.note { margin-left: 26px; }
.peek { width: 1px; height: 60px; background: #777; margin: 0 6px 0 18px; }
</style>
